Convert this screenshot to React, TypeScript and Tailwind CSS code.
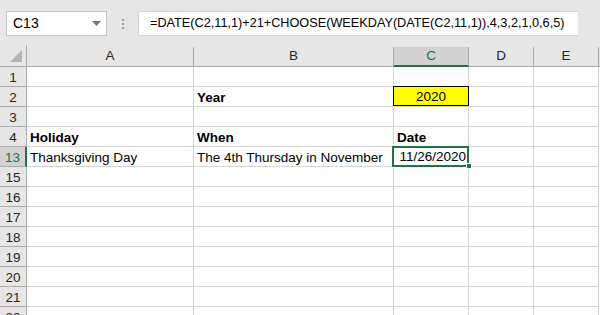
const cols = [
  { key: "A", w: "w-[167px]" },
  { key: "B", w: "w-[200px]" },
  { key: "C", w: "w-[75px]" },
  { key: "D", w: "w-[65px]" },
  { key: "E", w: "w-[65px]" },
];

const rows = ["1", "2", "3", "4", "13", "15", "16", "17", "18", "19", "20", "21", "22"];

function Cell({ row, col }: { row: string; col: string }) {
  const base = "h-[20px] shrink-0 border-r border-b border-[#d4d4d4] flex items-end pb-[1px] px-[3px] whitespace-nowrap leading-[15px]";
  const w = cols.find((c) => c.key === col)!.w;

  if (row === "2" && col === "B") return <div className={`${base} ${w} font-bold`}>Year</div>;
  if (row === "2" && col === "C")
    return (
      <div className={`${w} h-[20px] shrink-0 border-b border-[#d4d4d4] border-r`}>
        <div className="h-[20px] -mt-px -ml-px w-[76px] border border-black bg-[#ffff00] flex items-end justify-center pb-[1px] leading-[15px]">2020</div>
      </div>
    );
  if (row === "4" && col === "A") return <div className={`${base} ${w} font-bold`}>Holiday</div>;
  if (row === "4" && col === "B") return <div className={`${base} ${w} font-bold`}>When</div>;
  if (row === "4" && col === "C") return <div className={`${base} ${w} font-bold`}>Date</div>;
  if (row === "13" && col === "A") return <div className={`${base} ${w}`}>Thanksgiving Day</div>;
  if (row === "13" && col === "B") return <div className={`${base} ${w}`}>The 4th Thursday in November</div>;
  if (row === "13" && col === "C")
    return (
      <div className={`${w} h-[20px] shrink-0 border-b border-[#d4d4d4] border-r relative`}>
        <div className="absolute -left-[2px] -top-[1px] w-[77px] h-[21px] border-2 border-[#217346] flex items-end justify-end pr-[1px] pb-[1px] leading-[15px]">
          11/26/2020
        </div>
        <div className="absolute -right-[4px] -bottom-[3px] w-[6px] h-[6px] bg-[#217346] border border-white" />
      </div>
    );
  return <div className={`${base} ${w}`} />;
}

export default function App() {
  return (
    <div className="w-[600px] h-[315px] overflow-hidden bg-white text-[13.5px] text-black font-['Liberation_Sans',Arial,sans-serif]">
      {/* formula bar */}
      <div className="h-[45px] bg-[#e6e6e6] flex items-start pt-[11px] pl-[6px]">
        <div className="w-[101px] h-[25px] bg-white border border-[#c6c6c6] flex items-center pl-[6px] pr-[5px] justify-between text-[14px]">
          <span>C13</span>
          <svg width="9" height="5" viewBox="0 0 9 5"><path d="M0 0h9L4.5 5z" fill="#767676" /></svg>
        </div>
        <div className="w-[31px] h-[25px] flex flex-col items-center justify-center gap-[2px]">
          <span className="w-[2px] h-[2px] bg-[#9c9c9c]" />
          <span className="w-[2px] h-[2px] bg-[#9c9c9c]" />
          <span className="w-[2px] h-[2px] bg-[#9c9c9c]" />
        </div>
        <div className="w-[440px] h-[25px] bg-white border border-[#d4d4d4] border-r-0 flex items-center pl-[11px] whitespace-nowrap text-[12.7px]">
          =DATE(C2,11,1)+21+CHOOSE(WEEKDAY(DATE(C2,11,1)),4,3,2,1,0,6,5)
        </div>
      </div>

      {/* column headers */}
      <div className="flex h-[22px] bg-[#e6e6e6] border-b border-[#ababab]">
        <div className="w-[27px] shrink-0 border-r border-[#ababab] flex items-end justify-end pr-[4px] pb-[4px]">
          <svg width="12" height="12" viewBox="0 0 12 12"><path d="M12 0v12H0z" fill="#b4b4b4" /></svg>
        </div>
        {cols.map((c) =>
          c.key === "C" ? (
            <div key={c.key} className={`${c.w} shrink-0 mt-[2px] bg-[#d2d2d2] border-r border-[#ababab] border-b-2 border-b-[#217346] -mb-px flex items-center justify-center text-[#217346]`}>
              {c.key}
            </div>
          ) : (
            <div key={c.key} className={`${c.w} shrink-0 mt-[2px] border-r border-[#ababab] flex items-center justify-center text-[#262626]`}>
              {c.key}
            </div>
          )
        )}
      </div>

      {/* grid */}
      {rows.map((r) => (
        <div key={r} className="flex">
          <div
            className={`w-[27px] h-[20px] shrink-0 border-b flex items-end justify-center pb-[1px] leading-[15px] ${
              r === "13"
                ? "bg-[#d2d2d2] border-r-2 border-r-[#217346] border-b-[#ababab] text-[#217346]"
                : "bg-[#e6e6e6] border-r border-r-[#ababab] border-b-[#ababab] text-[#262626]"
            }`}
          >
            {r}
          </div>
          {cols.map((c) => (
            <Cell key={c.key} row={r} col={c.key} />
          ))}
        </div>
      ))}
    </div>
  );
}
